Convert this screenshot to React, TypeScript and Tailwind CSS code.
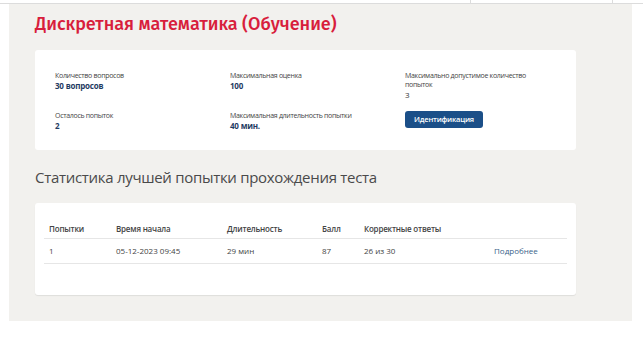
const stats = [
  { label: 'Количество вопросов', value: '30 вопросов' },
  { label: 'Максимальная оценка', value: '100' },
  { label: 'Максимально допустимое количество попыток', value: '3', plain: true },
  { label: 'Осталось попыток', value: '2' },
  { label: 'Максимальная длительность попытки', value: '40 мин.' },
];

const attempts = [
  { n: '1', start: '05-12-2023 09:45', duration: '29 мин', score: '87', correct: '26 из 30' },
];

export default function App() {
  return (
    <div className="min-h-[364px] bg-white font-['Open_Sans',sans-serif] text-[#333]">
      <div className="flex h-[4px] border-b border-[#dcdcdc]">
        <div className="w-[471px] border-r border-[#dcdcdc]" />
        <div className="w-[142px] border-r border-[#dcdcdc]" />
      </div>
      <div className="mx-[9px] w-[623px] bg-[#f2f1ee] px-[26px] pb-[26px] pt-[7px]">
        <h1 className="font-['Fira_Sans','Noto_Sans',sans-serif] text-[18px] font-medium leading-[26px] text-[#d81e3c]">
          Дискретная математика (Обучение)
        </h1>
        <div className="mt-[13px] grid h-[100px] w-[541px] grid-cols-[175px_175px_1fr] content-start gap-y-[11px] rounded-[3px] bg-white pl-[20px] pt-[21px]">
          {stats.map((s) => (
            <div key={s.label} className="text-[7px] leading-[9px] tracking-[-0.3px]">
              <div className="max-w-[135px] text-[#444]">{s.label}</div>
              <div
                className={
                  s.plain
                    ? 'text-[8px] leading-[11px] tracking-[-0.2px] text-[#333]'
                    : 'text-[8px] font-bold leading-[11px] tracking-[-0.2px] text-[#1f3b63]'
                }
              >
                {s.value}
              </div>
            </div>
          ))}
          <div className="flex items-start">
            <button className="block h-[17px] w-[78px] rounded-[3px] bg-[#1b4f88] text-[7.5px] font-semibold leading-[17px] tracking-[-0.2px] text-white">
              Идентификация
            </button>
          </div>
        </div>
        <h2 className="mt-[16px] text-[15px] leading-[22px] tracking-[-0.3px] text-[#4a4a4a]">
          Статистика лучшей попытки прохождения теста
        </h2>
        <div className="mt-[15px] h-[92px] w-[541px] rounded-[3px] bg-white px-[9px] pt-[17px] shadow-[0_1px_1px_rgba(0,0,0,0.08)]">
          <table className="w-[523px] border-collapse text-left text-[8px]">
            <thead>
              <tr className="border-b border-[#e6e6e6] font-semibold tracking-[-0.2px] text-[#444]">
                <th className="h-[18px] w-[72px] pl-[5px] font-semibold">Попытки</th>
                <th className="w-[111px] font-semibold">Время начала</th>
                <th className="w-[95px] font-semibold">Длительность</th>
                <th className="w-[42px] font-semibold">Балл</th>
                <th className="w-[130px] font-semibold">Корректные ответы</th>
                <th />
              </tr>
            </thead>
            <tbody>
              {attempts.map((a) => (
                <tr key={a.n} className="border-b border-[#e6e6e6] text-[#444]">
                  <td className="h-[25px] pl-[5px]">{a.n}</td>
                  <td>{a.start}</td>
                  <td>{a.duration}</td>
                  <td>{a.score}</td>
                  <td>{a.correct}</td>
                  <td className="text-[#3a5f8a]">Подробнее</td>
                </tr>
              ))}
            </tbody>
          </table>
        </div>
      </div>
    </div>
  );
}
